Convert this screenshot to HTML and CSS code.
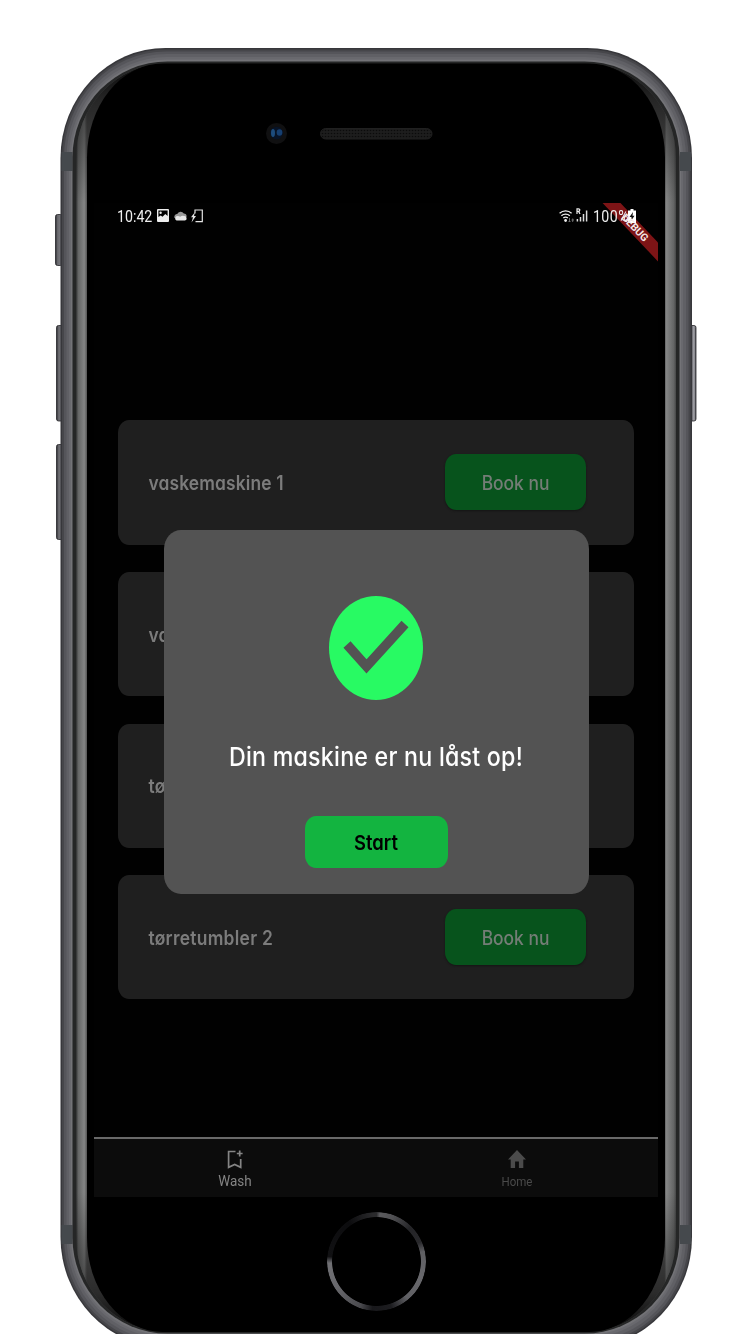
FILE: index.html
```html
<!DOCTYPE html>
<html lang="da">
<head>
<meta charset="utf-8">
<title>Vaskeri</title>
<link rel="stylesheet" href="styles.css">
</head>
<body>
<main class="stage">
  <svg class="device" viewBox="0 0 750 1334" aria-hidden="true">
    <defs>
      <linearGradient id="bezel" x1="74" x2="678" y1="0" y2="0" gradientUnits="userSpaceOnUse">
        <stop offset="0" stop-color="#2a2b2b"/><stop offset=".004" stop-color="#383939"/><stop offset=".007" stop-color="#646565"/><stop offset=".017" stop-color="#848585"/><stop offset=".0215" stop-color="#555"/>
        <stop offset=".9775" stop-color="#555"/><stop offset=".981" stop-color="#858686"/><stop offset=".993" stop-color="#646565"/><stop offset="1" stop-color="#2a2b2b"/>
      </linearGradient>
      <linearGradient id="shade" x1="0" x2="0" y1="63" y2="1332" gradientUnits="userSpaceOnUse">
        <stop offset="0" stop-color="#000" stop-opacity=".9"/><stop offset=".03" stop-color="#000" stop-opacity=".55"/><stop offset=".11" stop-color="#000" stop-opacity="0"/>
        <stop offset=".89" stop-color="#000" stop-opacity="0"/><stop offset=".97" stop-color="#000" stop-opacity=".5"/><stop offset="1" stop-color="#000" stop-opacity=".9"/>
      </linearGradient>
      <linearGradient id="key" x1="0" x2="1" y1="0" y2="0">
        <stop offset="0" stop-color="#2b2b2f"/><stop offset=".3" stop-color="#68686d"/><stop offset=".65" stop-color="#77777c"/><stop offset="1" stop-color="#29292d"/>
      </linearGradient>
      <linearGradient id="keyRight" x1="0" x2="1" y1="0" y2="0">
        <stop offset="0" stop-color="#2b2b2f"/><stop offset=".35" stop-color="#515156"/><stop offset=".7" stop-color="#aaaab0"/><stop offset="1" stop-color="#45454a"/>
      </linearGradient>
      <pattern id="mesh" width="3" height="3" patternUnits="userSpaceOnUse"><rect width="3" height="3" fill="#1d1d1d"/><circle cx="1.5" cy="1.5" r=".8" fill="#0b0b0b"/></pattern>
    </defs>
    <g stroke="#242428" stroke-width=".8">
      <rect x="55.5" y="214.500" width="7" height="51" rx="2" fill="url(#key)"/>
      <rect x="56.500" y="325.500" width="7" height="95.500" rx="2" fill="url(#key)"/>
      <rect x="56.500" y="444.500" width="7" height="95" rx="2" fill="url(#key)"/>
      <rect x="689" y="325.500" width="7" height="95.500" rx="2" fill="url(#keyRight)"/>
    </g>
    <rect x="60.500" y="48" width="631.500" height="1299" rx="105" ry="110" fill="#37373b"/>
    <rect x="62" y="49.500" width="628.500" height="1296" rx="103.500" ry="108" fill="#46464a"/>
    <rect x="64" y="51.500" width="624.500" height="1292" rx="102" ry="106" fill="#55555a"/>
    <rect x="66.500" y="54" width="619.500" height="1287" rx="100" ry="104" fill="#606065"/>
    <rect x="69" y="57" width="614" height="1281" rx="98" ry="101" fill="#69696e"/>
    <rect x="71" y="59.500" width="610" height="1276" rx="96" ry="98" fill="#737377"/>
    <path d="M61.500 152h11v19h-11zM680 152h11v19h-11zM61.500 1225h11v19h-11zM680 1225h11v19h-11z" fill="#45494d"/>
    <rect x="72.500" y="61.500" width="607" height="1272" rx="95" ry="96" fill="#252626"/>
    <rect x="76" y="63.500" width="600" height="1268.500" rx="91" ry="95" fill="url(#bezel)"/>
    <rect x="76" y="63.500" width="600" height="1268.500" rx="91" ry="95" fill="url(#shade)"/>
    <rect x="87" y="63.500" width="578" height="1268.500" rx="76" ry="94" fill="#000"/>
    <circle cx="276.500" cy="133.500" r="10.500" fill="#101011"/>
    <circle cx="276.500" cy="133" r="6.300" fill="#071326"/>
    <ellipse cx="273" cy="133" rx="2" ry="4" fill="#1d4c7c"/>
    <ellipse cx="279.500" cy="132.500" rx="2.800" ry="3.300" fill="#163f70"/>
    <rect x="320.500" y="128.500" width="111.500" height="10.500" rx="5.200" fill="url(#mesh)" stroke="#202020"/>
  </svg>

  <div class="face">
    <section class="screen">
      <div class="ribbon"></div>

      <header class="status">
        <div class="status-side">
          <span class="tall clock">10:42</span>
          <svg width="12" height="13" viewBox="0 0 12 13"><path fill="#eee" fill-rule="evenodd" d="M1 0h10a1 1 0 0 1 1 1v11a1 1 0 0 1-1 1H1a1 1 0 0 1-1-1V1a1 1 0 0 1 1-1zm.4 1.500V8l2.300-1.500 1.800 1.300L8.300 5l2.300 2V1.500z"/><circle cx="3.600" cy="3.800" r="1.200" fill="#eee"/></svg>
          <svg width="13" height="10" viewBox="0 0 13 10"><path fill="#999" d="M.5 7a3 3 0 0 1 2.700-4 3.800 3.800 0 0 1 6.600-.5A3 3 0 0 1 12.500 6z"/><path fill="#e8e8e8" d="M2.600 9.500A2.300 2.300 0 0 1 2.400 5.300q2-.6 3.800.5 2-1.800 4-.8a2.300 2.300 0 0 1 .8 4.500z"/></svg>
          <svg width="12" height="14" viewBox="0 0 12 14"><path fill="none" stroke="#e5e5e5" stroke-width="1.200" d="M4 4.500V1h7.300v11.700H4.500"/><path fill="#e5e5e5" d="M4 3 0 8.300h2L.5 13.500 5 7H3z"/></svg>
        </div>
        <div class="status-side right">
          <svg width="17" height="14" viewBox="0 0 17 14"><g fill="none" stroke="#eee" stroke-width="1.300"><path d="M.6 4.300a8.800 8.800 0 0 1 12 0M2.400 6.700a6.200 6.200 0 0 1 8.400 0M4.300 9.100a3.500 3.500 0 0 1 4.600 0"/></g><circle cx="6.600" cy="11.500" r="1.400" fill="#eee"/><path d="M10.500 9v4M9.500 12l1 1 1-1M13.700 13V9.500M12.500 11h2.500" fill="none" stroke="#777" stroke-width=".9"/></svg>
          <svg class="signal" width="12" height="15" viewBox="0 0 12 15"><path d="M1 6V.8h1.500a1.200 1.200 0 0 1 0 2.600H1M2.600 3.400 4 6" fill="none" stroke="#eee" stroke-width="1.200"/><path d="M1.400 11v2.500M4.500 9v4.500M7.500 6v7.500M10.600 2.500v11" stroke="#ddd" stroke-width="1.500"/></svg>
          <span class="tall percent">100%</span>
          <svg class="battery" width="8" height="14" viewBox="0 0 8 14"><path fill="#fff" d="M2.500 0h3v1.500H8V14H0V1.500h2.500z"/><path fill="#111" d="M5 3 1.500 8h2L3 12l3.500-5.300h-2z"/></svg>
        </div>
      </header>
      <div class="ribbon label"><span>DEBUG</span></div>

      <div class="machines">
        <article class="card"><span class="tall name n1">vaskemaskine 1</span><button class="book"><span class="tall">Book nu</span></button></article>
        <article class="card"><span class="tall name">vaskemaskine 2</span><button class="book"><span class="tall">Book nu</span></button></article>
        <article class="card"><span class="tall name n4">tørretumbler 1</span><button class="book"><span class="tall">Book nu</span></button></article>
        <article class="card"><span class="tall name n4">tørretumbler 2</span><button class="book"><span class="tall">Book nu</span></button></article>
      </div>

      <nav class="tabs">
        <div class="tab active">
          <svg width="16" height="19" viewBox="0 0 16 19"><path fill="none" stroke="#858585" stroke-width="1.700" d="M8.500 1.500H1.600v15.800L7.700 14.500l6 2.800V9M12.700.5v6M9.800 3.500h5.800"/></svg>
          <span class="tall">Wash</span>
        </div>
        <div class="tab">
          <svg width="18" height="18" viewBox="0 0 18 18"><path fill="#4b4b4b" d="M9 0l9 9.500h-2.700V18h-4.400v-6.500H7.100V18H2.700V9.500H0z"/></svg>
          <span class="tall">Home</span>
        </div>
      </nav>

      <div class="dialog">
        <svg class="check" width="94" height="104" viewBox="0 0 94 104"><ellipse cx="47" cy="52" rx="47" ry="52" fill="#28fa63"/><path d="M18 48.500 37.500 70.500 76 28" fill="none" stroke="#535353" stroke-width="9.500"/></svg>
        <p class="message"><span class="tall">Din maskine er nu låst op!</span></p>
        <button class="start"><span class="tall">Start</span></button>
      </div>
    </section>
    <div class="home-ring"></div>
  </div>
</main>
</body>
</html>
```
FILE: styles.css
```css
* { box-sizing: border-box; }
body { margin: 0; background: #fff; overflow: hidden; }
.stage { display: grid; width: 750px; height: 1334px; overflow: hidden; }
.device, .face { grid-area: 1 / 1; }
.device { width: 750px; height: 1334px; display: block; }
.face { display: flex; flex-direction: column; align-items: center; padding: 203px 0 0 2px; z-index: 1; }
.screen {
  position: relative; width: 564px; height: 993.5px;
  display: flex; flex-direction: column; background: #010101; overflow: hidden;
  font-family: Inter, "Open Sans", sans-serif; font-feature-settings: "cv11" 1;
}
.tall { display: inline-block; transform: scaleY(1.12); white-space: nowrap; }
button { border: 0; padding: 0; font: inherit; font-feature-settings: inherit; color: inherit; }

.status {
  position: relative; display: flex; justify-content: space-between; align-items: center;
  height: 25px; padding: 0 22px 0 23px; color: #eee;
  font: 14.2px Roboto, sans-serif;
}
.status-side { display: flex; align-items: center; gap: 4.7px; }
.status svg { display: block; }
.status-side.right { gap: 0; }
.signal { margin: 0 4.500px 0 0; }
.percent { letter-spacing: .45px; }
.battery { margin-left: -1px; }

.machines { display: flex; flex-direction: column; gap: 27.4px; padding: 192.4px 24px 0 24px; }
.card {
  display: flex; align-items: center; justify-content: space-between;
  height: 124.2px; padding: 0 48px 0 30.5px; border-radius: 11px / 13px; background: #1f1f1f;
}
.name { color: #7c7c7c; font-size: 17.4px; font-weight: 600; letter-spacing: .14px; }
.n4 { letter-spacing: .28px; }
.book {
  width: 141px; height: 56px; border-radius: 11px / 13px; background: #07531c; color: #747d76;
  font-size: 17.4px; font-weight: 500; box-shadow: 0 1px 2px #151515;
}

.tabs { display: flex; height: 60px; margin-top: auto; border-top: 2px solid #696969; background: #0c0c0c; font-family: Roboto, sans-serif; }
.tab { flex: 1; display: flex; flex-direction: column; align-items: center; padding-top: 11px; color: #4a4a4a; font-size: 11.5px; gap: 7px; line-height: 14px; }
.tab.active { color: #858585; font-size: 13.5px; gap: 4px; padding-top: 11px; }

.ribbon {
  position: absolute; right: -29px; top: 15px; width: 110px; height: 12.6px;
  display: flex; align-items: center; justify-content: center;
  background: #7d1416; color: #f4e8e8; font: 700 10.5px Roboto, sans-serif; transform: rotate(46.5deg);
}
.ribbon.label { background: none; }
.ribbon span { padding-left: 9px; }

.dialog {
  position: absolute; left: 69.5px; top: 327.4px; width: 425px; height: 364px;
  display: flex; flex-direction: column; align-items: center; padding-top: 66px;
  border-radius: 17px / 19px; background: #535353;
}
.check { display: block; }
.message { margin: 41.2px 0 0; height: 30px; line-height: 30px; font-size: 23.2px; letter-spacing: .24px; font-weight: 500; color: #fff; }
.start { width: 143px; height: 52px; margin-top: 44px; border-radius: 11px / 13px; background: #13b440; color: #000; font-size: 18.4px; font-weight: 600; }

.home-ring {
  width: 99px; height: 99px; margin-top: 15.5px; border-radius: 50%;
  background: conic-gradient(#2a2a2c 0deg, #5b5b5e 4deg, #505053 20deg, #242427 45deg, #28282b 66deg, #5e5e62 78deg, #68686c 110deg, #606064 140deg, #1c1c1f 162deg, #18181b 185deg, #4a4a4e 200deg, #67676b 235deg, #707074 268deg, #111113 276deg, #0c0c0e 325deg, #2a2a2c 356deg, #2a2a2c 360deg);
  -webkit-mask: radial-gradient(circle, transparent 44px, #000 44.800px);
  mask: radial-gradient(circle, transparent 44px, #000 44.800px);
}
```
